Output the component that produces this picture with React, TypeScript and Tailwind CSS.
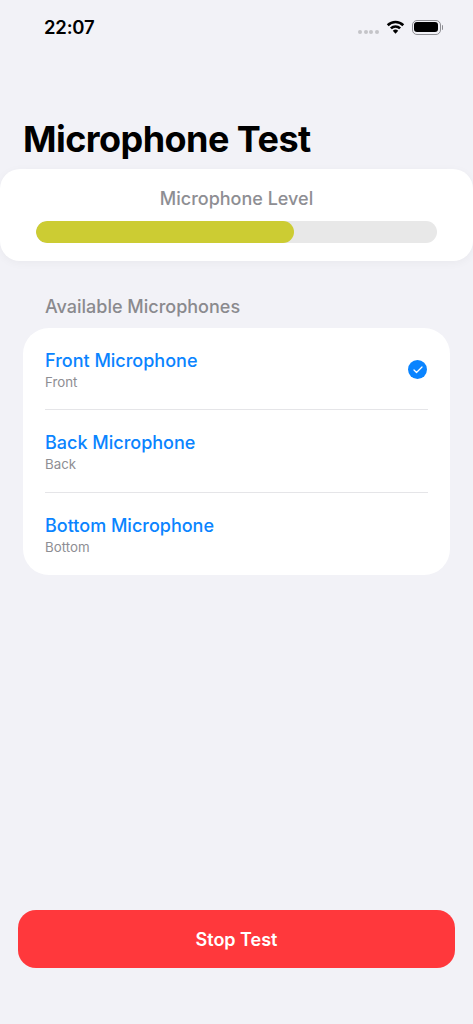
import { Check } from 'lucide-react';

const mics = [
    { name: 'Front Microphone', sub: 'Front', selected: true },
    { name: 'Back Microphone', sub: 'Back', selected: false },
    { name: 'Bottom Microphone', sub: 'Bottom', selected: false },
];

function StatusIcons() {
    return (
        <div className="flex items-center">
            <div className="flex gap-[1.5px] mt-[10px] mr-[7px]">
                <span className="w-[4px] h-[4px] rounded-full bg-[#c4c4c8]"></span>
                <span className="w-[4px] h-[4px] rounded-full bg-[#c4c4c8]"></span>
                <span className="w-[4px] h-[4px] rounded-full bg-[#c4c4c8]"></span>
                <span className="w-[4px] h-[4px] rounded-full bg-[#c4c4c8]"></span>
            </div>
            <svg width="19" height="14" viewBox="0 0 19 14" className="mr-[7px]">
                <path d="M1.72 5.22A11 11 0 0 1 17.28 5.22" fill="none" stroke="#000" strokeWidth="2.6" />
                <path d="M4.9 8.4A6.5 6.5 0 0 1 14.1 8.4" fill="none" stroke="#000" strokeWidth="2.6" />
                <path d="M9.5 13.8L6.8 10.8A4 4 0 0 1 12.2 10.8Z" fill="#000" />
            </svg>
            <div className="w-[29px] h-[15px] rounded-[5px] border border-[#8e8e93] p-[1.5px]">
                <div className="w-full h-full rounded-[3px] bg-black"></div>
            </div>
            <div className="w-[1.5px] h-[5px] rounded-r-full bg-[#8e8e93] ml-[1px]"></div>
        </div>
    );
}

export default function App() {
    return (
        <div className="w-[473px] h-[1024px] bg-[#f2f2f7] flex flex-col overflow-hidden font-['Inter',sans-serif]">
            <div className="h-[54px] pl-[44px] pr-[30px] flex items-center justify-between">
                <span className="text-[18.5px] font-semibold text-black leading-none tracking-[-0.2px]">22:07</span>
                <StatusIcons />
            </div>

            <h1 className="mt-[61px] ml-[23px] text-[36px] leading-[48px] font-bold tracking-[-0.55px] text-black">
                Microphone Test
            </h1>

            <div className="mt-[6px] h-[92px] bg-white rounded-[20px] px-[36px] pt-[18px] shadow-[0_2px_10px_rgba(0,0,0,0.04)]">
                <p className="text-center text-[18px] leading-[24px] font-medium text-[#8e8e93]">Microphone Level</p>
                <div className="mt-[10px] h-[22px] rounded-full bg-[#e8e8e8] overflow-hidden">
                    <div className="w-[258px] h-full rounded-full bg-[#cccc33]"></div>
                </div>
            </div>

            <h2 className="mt-[33px] ml-[45px] pt-[1px] text-[18px] leading-[24px] font-medium text-[#8a8a8e]">
                Available Microphones
            </h2>

            <div className="mt-[9px] mx-[23px] bg-white rounded-[26px] pl-[22px] pr-[22px]">
                {mics.map((mic, i) => (
                    <div
                        key={mic.name}
                        className={`h-[82.33px] pt-[2px] flex items-center justify-between ${i < 2 ? 'border-b border-[#e5e5e8]' : ''}`}
                    >
                        <div className="flex flex-col">
                            <span className="text-[18px] leading-[24px] font-medium text-[#0a84ff]">{mic.name}</span>
                            <span className="text-[13.3px] leading-[18px] text-[#8e8e93]">{mic.sub}</span>
                        </div>
                        {mic.selected && (
                            <div className="w-[19px] h-[19px] mr-[1px] rounded-full bg-[#0a84ff] flex items-center justify-center">
                                <Check size={12} strokeWidth={2.5} color="#fff" />
                            </div>
                        )}
                    </div>
                ))}
            </div>

            <div className="mt-auto mb-[56px] mx-[18px]">
                <button className="w-full h-[58px] rounded-[18px] bg-[#ff383c] text-white text-[18px] font-semibold">
                    Stop Test
                </button>
            </div>
        </div>
    );
}
